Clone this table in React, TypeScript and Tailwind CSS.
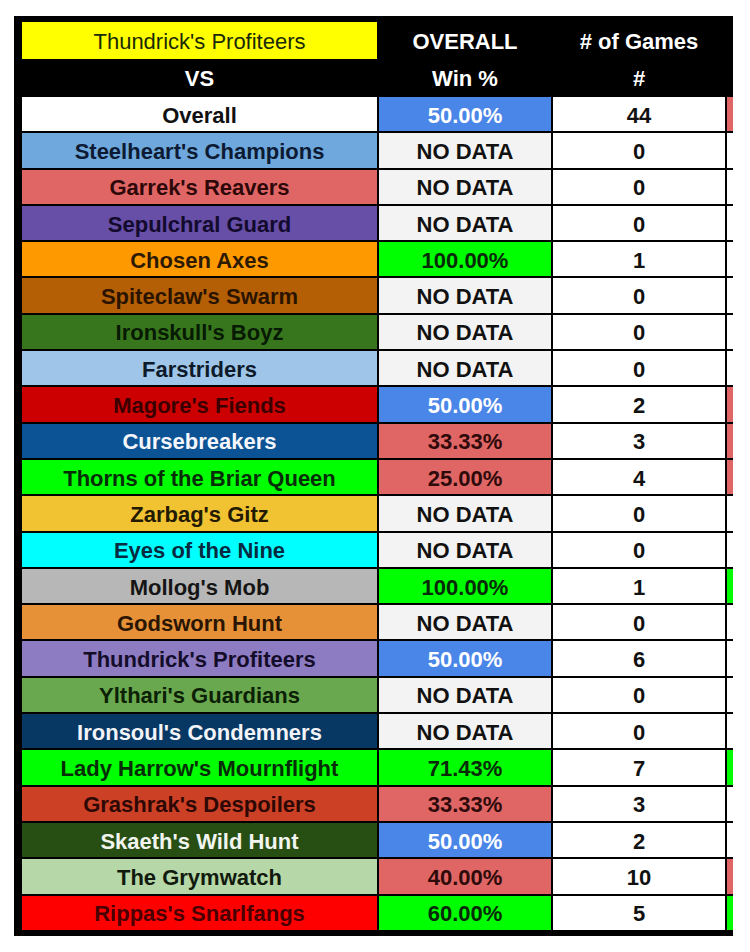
import { Fragment } from "react";

const rows = [
    { name: "Overall", bg: "bg-white", fg: "text-[#111]", win: "50.00%", games: "44", edge: "bg-[#e06666]" },
    { name: "Steelheart's Champions", bg: "bg-[#6fa8dc]", fg: "text-[#0d1a33]", win: "NO DATA", games: "0", edge: "bg-white" },
    { name: "Garrek's Reavers", bg: "bg-[#e06666]", fg: "text-[#2e0808]", win: "NO DATA", games: "0", edge: "bg-white" },
    { name: "Sepulchral Guard", bg: "bg-[#674ea7]", fg: "text-[#130b2e]", win: "NO DATA", games: "0", edge: "bg-white" },
    { name: "Chosen Axes", bg: "bg-[#ff9900]", fg: "text-[#2e1a00]", win: "100.00%", games: "1", edge: "bg-white" },
    { name: "Spiteclaw's Swarm", bg: "bg-[#b45f06]", fg: "text-[#2a1400]", win: "NO DATA", games: "0", edge: "bg-white" },
    { name: "Ironskull's Boyz", bg: "bg-[#38761d]", fg: "text-[#071a03]", win: "NO DATA", games: "0", edge: "bg-white" },
    { name: "Farstriders", bg: "bg-[#9fc5e8]", fg: "text-[#0d1a2a]", win: "NO DATA", games: "0", edge: "bg-white" },
    { name: "Magore's Fiends", bg: "bg-[#cc0000]", fg: "text-[#3a0000]", win: "50.00%", games: "2", edge: "bg-[#e06666]" },
    { name: "Cursebreakers", bg: "bg-[#0b5394]", fg: "text-[#f4f6fb]", win: "33.33%", games: "3", edge: "bg-[#e06666]" },
    { name: "Thorns of the Briar Queen", bg: "bg-[#00ff00]", fg: "text-[#062e06]", win: "25.00%", games: "4", edge: "bg-[#e06666]" },
    { name: "Zarbag's Gitz", bg: "bg-[#f1c232]", fg: "text-[#231a02]", win: "NO DATA", games: "0", edge: "bg-white" },
    { name: "Eyes of the Nine", bg: "bg-[#00ffff]", fg: "text-[#062a40]", win: "NO DATA", games: "0", edge: "bg-white" },
    { name: "Mollog's Mob", bg: "bg-[#b7b7b7]", fg: "text-[#151515]", win: "100.00%", games: "1", edge: "bg-[#00ff00]" },
    { name: "Godsworn Hunt", bg: "bg-[#e69138]", fg: "text-[#2a1502]", win: "NO DATA", games: "0", edge: "bg-white" },
    { name: "Thundrick's Profiteers", bg: "bg-[#8e7cc3]", fg: "text-[#140d2a]", win: "50.00%", games: "6", edge: "bg-white" },
    { name: "Ylthari's Guardians", bg: "bg-[#6aa84f]", fg: "text-[#0b2005]", win: "NO DATA", games: "0", edge: "bg-white" },
    { name: "Ironsoul's Condemners", bg: "bg-[#073763]", fg: "text-[#f2f4f8]", win: "NO DATA", games: "0", edge: "bg-white" },
    { name: "Lady Harrow's Mournflight", bg: "bg-[#00ff00]", fg: "text-[#062e06]", win: "71.43%", games: "7", edge: "bg-[#00ff00]" },
    { name: "Grashrak's Despoilers", bg: "bg-[#cc4125]", fg: "text-[#2e0804]", win: "33.33%", games: "3", edge: "bg-white" },
    { name: "Skaeth's Wild Hunt", bg: "bg-[#274e13]", fg: "text-[#f2f5ef]", win: "50.00%", games: "2", edge: "bg-white" },
    { name: "The Grymwatch", bg: "bg-[#b6d7a8]", fg: "text-[#111a0d]", win: "40.00%", games: "10", edge: "bg-[#e06666]" },
    { name: "Rippas's Snarlfangs", bg: "bg-[#ff0000]", fg: "text-[#4a0000]", win: "60.00%", games: "5", edge: "bg-[#00ff00]" },
];

// colour of the win % cell, like the sheet's conditional formatting
const winStyle = (win: string) => {
    if (win === "NO DATA") return "bg-[#f3f3f3] text-[#111]";
    const v = parseFloat(win);
    if (v > 50) return "bg-[#00ff00] text-[#082a08]";
    if (v === 50) return "bg-[#4a86e8] text-white";
    return "bg-[#e06666] text-[#2e0a0a]";
};

const App = () => {
    return (
        <div className="min-h-[952px] bg-white pt-[16px] pl-[14px] font-['Liberation_Sans',Arial,sans-serif] font-bold text-[22px] leading-none">
            <div className="w-[719px] bg-black pl-[8px] pt-[6px] pb-[6px]">
                <div className="grid grid-cols-[355px_172px_172px_6px] gap-x-[2px]">
                    <div className="h-[37px] pt-[2px] bg-[#ffff00] flex items-center justify-center font-normal text-[#1a2a08]">Thundrick's Profiteers</div>
                    <div className="h-[37px] pt-[3px] flex items-center justify-center text-white">OVERALL</div>
                    <div className="h-[37px] pt-[3px] flex items-center justify-center text-white"># of Games</div>
                    <div />
                    <div className="h-[36px] pt-[3px] flex items-center justify-center text-white">VS</div>
                    <div className="h-[36px] pt-[3px] flex items-center justify-center text-white">Win %</div>
                    <div className="h-[36px] pt-[3px] flex items-center justify-center text-white">#</div>
                    <div />
                </div>
                <div className="mt-[2px] grid grid-cols-[355px_172px_172px_6px] gap-x-[2px] gap-y-[2px]">
                    {rows.map((r) => (
                        <Fragment key={r.name}>
                            <div className={`h-[34.3px] pt-[3px] flex items-center justify-center ${r.bg} ${r.fg}`}>{r.name}</div>
                            <div className={`h-[34.3px] pt-[3px] flex items-center justify-center ${winStyle(r.win)}`}>{r.win}</div>
                            <div className="h-[34.3px] pt-[3px] flex items-center justify-center bg-white text-[#111]">{r.games}</div>
                            <div className={`h-[34.3px] ${r.edge}`} />
                        </Fragment>
                    ))}
                </div>
            </div>
        </div>
    );
};

export default App;
